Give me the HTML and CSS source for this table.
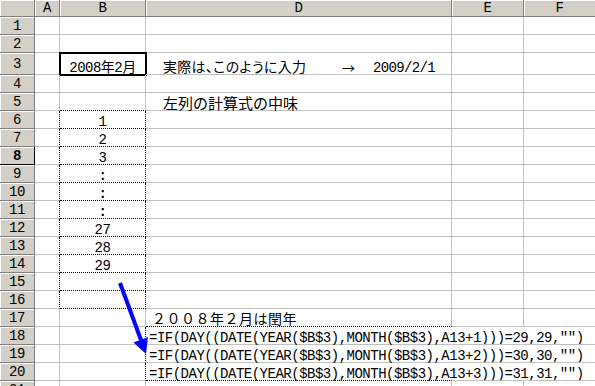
FILE: index.html
```html
<!DOCTYPE html>
<html lang="ja">

<head>
    <meta charset="UTF-8" />
    <meta name="viewport" content="width=device-width, initial-scale=1.0" />
    <title>2008年2月</title>
    <link rel="stylesheet" href="styles.css">
</head>

<body>
    <div class="sheet">
        <div class="row head">
            <div class="hd"></div>
            <div class="hd">A</div>
            <div class="hd">B</div>
            <div class="hd">D</div>
            <div class="hd">E</div>
            <div class="hd">F</div>
        </div>

        <div class="row">
            <div class="rh">1</div>
            <div class="c"></div><div class="c"></div><div class="c"></div><div class="c"></div><div class="c"></div>
        </div>
        <div class="row">
            <div class="rh">2</div>
            <div class="c"></div><div class="c"></div><div class="c"></div><div class="c"></div><div class="c"></div>
        </div>
        <div class="row tall">
            <div class="rh">3</div>
            <div class="c"></div>
            <div class="c ctr boxed">2008年2月</div>
            <div class="c note">
                <span class="lead">実際は、このように入力</span><span class="to">→</span><span class="date">2009/2/1</span>
            </div>
            <div class="c"></div><div class="c"></div>
        </div>
        <div class="row">
            <div class="rh">4</div>
            <div class="c"></div><div class="c"></div><div class="c"></div><div class="c"></div><div class="c"></div>
        </div>
        <div class="row">
            <div class="rh">5</div>
            <div class="c"></div>
            <div class="c mk-b"></div>
            <div class="c note caption">左列の計算式の中味</div>
            <div class="c"></div><div class="c"></div>
        </div>

        <!-- day numbers, B6:B16 -->
        <div class="row">
            <div class="rh">6</div>
            <div class="c mk-r"></div><div class="c ctr mk">1</div>
            <div class="c"></div><div class="c"></div><div class="c"></div>
        </div>
        <div class="row">
            <div class="rh">7</div>
            <div class="c mk-r"></div><div class="c ctr mk">2</div>
            <div class="c"></div><div class="c"></div><div class="c"></div>
        </div>
        <div class="row">
            <div class="rh sel">8</div>
            <div class="c mk-r"></div><div class="c ctr mk">3</div>
            <div class="c"></div><div class="c"></div><div class="c"></div>
        </div>
        <div class="row">
            <div class="rh">9</div>
            <div class="c mk-r"></div><div class="c ctr mk dots">:</div>
            <div class="c"></div><div class="c"></div><div class="c"></div>
        </div>
        <div class="row">
            <div class="rh">10</div>
            <div class="c mk-r"></div><div class="c ctr mk dots">:</div>
            <div class="c"></div><div class="c"></div><div class="c"></div>
        </div>
        <div class="row">
            <div class="rh">11</div>
            <div class="c mk-r"></div><div class="c ctr mk dots">:</div>
            <div class="c"></div><div class="c"></div><div class="c"></div>
        </div>
        <div class="row">
            <div class="rh">12</div>
            <div class="c mk-r"></div><div class="c ctr mk">27</div>
            <div class="c"></div><div class="c"></div><div class="c"></div>
        </div>
        <div class="row">
            <div class="rh">13</div>
            <div class="c mk-r"></div><div class="c ctr mk">28</div>
            <div class="c"></div><div class="c"></div><div class="c"></div>
        </div>
        <div class="row">
            <div class="rh">14</div>
            <div class="c mk-r"></div><div class="c ctr mk">29</div>
            <div class="c"></div><div class="c"></div><div class="c"></div>
        </div>
        <div class="row">
            <div class="rh">15</div>
            <div class="c mk-r"></div><div class="c ctr mk"></div>
            <div class="c"></div><div class="c"></div><div class="c"></div>
        </div>
        <div class="row">
            <div class="rh">16</div>
            <div class="c mk-r"></div><div class="c ctr mk"></div>
            <div class="c"></div><div class="c"></div><div class="c"></div>
        </div>

        <div class="row">
            <div class="rh">17</div>
            <div class="c"></div><div class="c"></div>
            <div class="c leap mk-b">２００８年２月は閏年</div>
            <div class="c"></div><div class="c"></div>
        </div>

        <!-- formulas behind B12:B14 -->
        <div class="row">
            <div class="rh">18</div>
            <div class="c"></div><div class="c mk-r"></div>
            <div class="c formula spill">=IF(DAY((DATE(YEAR($B$3),MONTH($B$3),A13+1)))=29,29,"")</div>
            <div class="c spill"></div><div class="c"></div>
        </div>
        <div class="row">
            <div class="rh">19</div>
            <div class="c"></div><div class="c mk-r"></div>
            <div class="c formula spill">=IF(DAY((DATE(YEAR($B$3),MONTH($B$3),A13+2)))=30,30,"")</div>
            <div class="c spill"></div><div class="c"></div>
        </div>
        <div class="row">
            <div class="rh">20</div>
            <div class="c"></div><div class="c mk-r"></div>
            <div class="c formula spill mk-b">=IF(DAY((DATE(YEAR($B$3),MONTH($B$3),A13+3)))=31,31,"")</div>
            <div class="c spill"></div><div class="c"></div>
        </div>
        <div class="row">
            <div class="rh">21</div>
            <div class="c"></div><div class="c"></div><div class="c"></div><div class="c"></div><div class="c"></div>
        </div>

        <svg class="pointer" width="595" height="386" viewBox="0 0 595 386">
            <line x1="120" y1="283" x2="141" y2="340" stroke="#0000ff" stroke-width="4" />
            <polygon points="146,354 148,337 133.5,342.5" fill="#0000ff" />
        </svg>
    </div>
</body>

</html>
```

FILE: styles.css
```css
* {
    box-sizing: border-box;
}

html,
body {
    margin: 0;
    overflow: hidden;
    background-color: #fff;
}

.sheet {
    position: relative;
    width: 595px;
    height: 386px;
    overflow: hidden;
    font-family: "Liberation Mono", "Noto Sans CJK JP", monospace;
    font-size: 14px;
    letter-spacing: -0.5px;
    color: #000;
}

.row {
    display: grid;
    grid-template-columns: 35px 25px 86px 306px 72px 72px;
    height: 18px;
}

.row.head {
    height: 17px;
}

.row.tall {
    height: 22px;
}

/* column and row headers */
.hd,
.rh {
    background-color: #d4d0c8;
    border-right: 1px solid #808080;
    border-bottom: 1px solid #808080;
    box-shadow: inset 1px 1px 0 #fff;
    display: flex;
    justify-content: center;
    align-items: center;
    line-height: 1;
}

.rh.sel {
    font-weight: bold;
    border-right-color: #000;
    border-bottom-color: #000;
}

/* cells */
.c {
    border-right: 1px solid #c0c0c0;
    border-bottom: 1px solid #c0c0c0;
    display: flex;
    align-items: flex-end;
    line-height: 12px;
    white-space: nowrap;
    min-width: 0;
}

.ctr {
    justify-content: center;
}

.boxed {
    border-right-color: #000;
    border-bottom-color: #000;
    box-shadow: 0 0 0 1px #000, inset 1px 1px 0 #000;
}

.note {
    padding-left: 17px;
}

.lead {
    display: inline-block;
    width: 179px;
    font-feature-settings: "palt";
    letter-spacing: 0.3px;
}

.to {
    display: inline-block;
    width: 31px;
    font-family: "Noto Sans CJK JP", sans-serif;
    font-size: 13px;
}

.date {
    letter-spacing: -0.65px;
}

.caption {
    font-size: 15px;
    line-height: 9px;
    letter-spacing: 0;
}

.leap {
    padding-left: 6px;
    letter-spacing: 0.5px;
}

.formula {
    padding-left: 3px;
    letter-spacing: -0.5px;
    overflow: visible;
}

.dots {
    font-weight: bold;
}

/* dotted range marks */
.mk {
    border-right: 1px dotted #000;
    border-bottom: 1px dotted #000;
}

.mk-r {
    border-right: 1px dotted #000;
}

.mk-b {
    border-bottom: 1px dotted #000;
}

.spill {
    border-right-color: transparent;
}

.pointer {
    position: absolute;
    top: 0;
    left: 0;
    pointer-events: none;
}
```
